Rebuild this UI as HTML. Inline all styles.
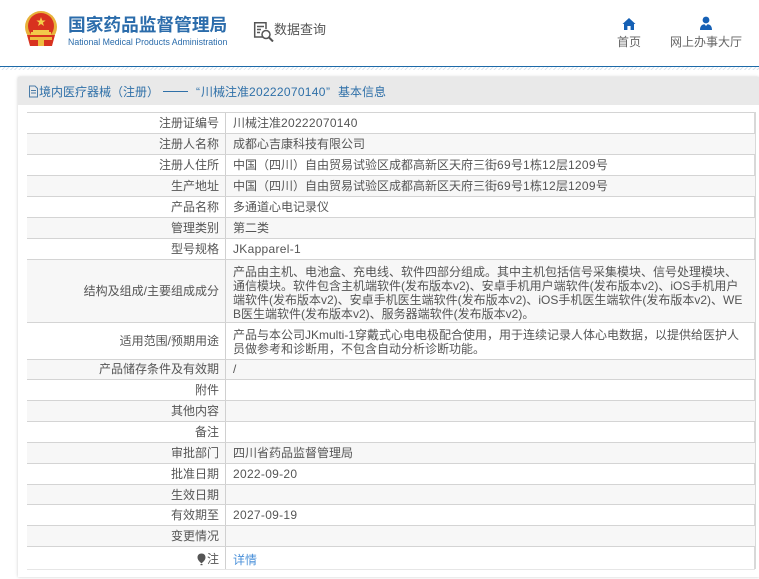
<!DOCTYPE html>
<html lang="zh"><head><meta charset="utf-8"><style>
html,body{margin:0;padding:0;background:#fff}
#p{position:relative;width:759px;height:579px;overflow:hidden;background:#fff;font-family:"Liberation Sans","Noto Sans CJK SC",sans-serif;font-size:12px;color:#555}
#p>*{position:absolute}
.r{left:27px;width:728px;box-sizing:border-box;border-bottom:1px solid #d4d4d4}
.g{background:#f7f7f7}
.l{position:absolute;right:536px;top:0;white-space:nowrap;line-height:21px}
.v{position:absolute;left:206px;top:0;width:518px;line-height:14px;white-space:nowrap}
.o{line-height:21px}
.s{position:absolute;left:198px;top:0;bottom:0;width:1px;background:#d0d0d0}
.d{letter-spacing:.3px}
.h{top:83px;line-height:19px;color:#2f70a8;white-space:nowrap}
</style></head><body><div id="p">
<svg style="left:24px;top:11px" width="34" height="36" viewBox="0 0 34 36">
<circle cx="17" cy="16" r="16" fill="#e8b23a"/><circle cx="17" cy="15" r="13" fill="#d8321f"/>
<polygon points="17,6 18.2,9.5 21.6,9.5 18.9,11.6 20,15 17,13 14,15 15.1,11.6 12.4,9.5 15.8,9.5" fill="#f4cf4a"/>
<rect x="9" y="19" width="16" height="2" fill="#f2c94a"/><rect x="7" y="21" width="20" height="3" fill="#f2c94a"/>
<path d="M3 24 L31 24 L28 35 L6 35 Z" fill="#d8321f"/><path d="M6 26 H28 V29 H6Z M14 29 H20 V35 H14Z" fill="#eebc3f"/>
</svg>
<div style="left:68px;top:13px;font-size:17.7px;font-weight:bold;color:#2b6cab;line-height:24px;white-space:nowrap">国家药品监督管理局</div>
<div style="left:68px;top:36px;font-size:8.77px;color:#2b6cab;line-height:12px;white-space:nowrap">National Medical Products Administration</div>
<svg style="left:253px;top:21px" width="21" height="21" viewBox="0 0 21 21" fill="none" stroke="#555" stroke-width="1.5">
<path d="M10 16H1.7V1.7H13V8"/><path d="M4 5.5H11M4 8.5H8M4 11.5H7"/><circle cx="13" cy="13.5" r="4"/><path d="M16 16.5L20 20.5" stroke-width="2"/>
</svg>
<div style="left:274px;top:20px;font-size:13px;color:#555;line-height:20px;white-space:nowrap">数据查询</div>
<svg style="left:622px;top:17px" width="14" height="14" viewBox="0 0 14 14"><path d="M7 1 L13.5 7 L12 7 V13 H8.6 V9 H5.4 V13 H2 V7 H.5 Z" fill="#1560b5"/></svg>
<svg style="left:699px;top:16px" width="14" height="14" viewBox="0 0 14 14"><circle cx="7" cy="4" r="3.4" fill="#1560b5"/><path d="M1 14 C1 10 3 8.5 5.5 8.3 L7 10 L8.5 8.3 C11 8.5 13 10 13 14 Z" fill="#1560b5"/></svg>
<div style="left:617px;top:33px;line-height:18px;white-space:nowrap;color:#666">首页</div>
<div style="left:670px;top:33px;line-height:18px;white-space:nowrap;color:#666">网上办事大厅</div>
<div style="left:0;top:66px;width:759px;height:1px;background:#1d6aa8"></div>
<div style="left:0;top:67px;width:759px;height:3px;background:repeating-linear-gradient(135deg,#dbe5ee 0 1px,#fff 1px 3px)"></div>
<div style="left:18px;top:77px;width:741px;height:500px;box-shadow:0 0 3px #ccc"></div>
<div style="left:18px;top:77px;width:741px;height:28px;background:#e9e9e9"></div>
<svg style="left:28px;top:85px" width="11" height="13" viewBox="0 0 11 13" fill="none" stroke="#4a7ca8"><path d="M1.5 1H7L9.5 3.5V12H1.5Z M3 5.5H8M3 8H8"/></svg>
<div class="h" style="left:39px">境内医疗器械</div>
<div class="h" style="left:111px">（</div>
<div class="h" style="left:123px">注册</div>
<div class="h" style="left:147px">）</div>
<div class="h" style="left:163px;width:25px;top:91px;height:1px;background:#2f70a8"></div>
<div class="h" style="left:196px">“</div>
<div class="h" style="left:201px">川械注准<span style="letter-spacing:.3px">20222070140</span></div>
<div class="h" style="left:326px">”</div>
<div class="h" style="left:338px">基本信息</div>
<div style="left:27px;top:112px;width:728px;height:1px;background:#d4d4d4"></div>
<div style="left:754px;top:112px;width:2px;height:457px;background:#d8d8d8"></div>

<div class="r" style="top:113px;height:21px"><div class="s"></div><div class="l">注册证编号</div><div class="v o">川械注准<span class="d">20222070140</span></div></div>
<div class="r g" style="top:134px;height:21px"><div class="s"></div><div class="l">注册人名称</div><div class="v o">成都心吉康科技有限公司</div></div>
<div class="r" style="top:155px;height:21px"><div class="s"></div><div class="l">注册人住所</div><div class="v o">中国（四川）自由贸易试验区成都高新区天府三街<span class="d">69</span>号<span class="d">1</span>栋<span class="d">12</span>层<span class="d">1209</span>号</div></div>
<div class="r g" style="top:176px;height:21px"><div class="s"></div><div class="l">生产地址</div><div class="v o">中国（四川）自由贸易试验区成都高新区天府三街<span class="d">69</span>号<span class="d">1</span>栋<span class="d">12</span>层<span class="d">1209</span>号</div></div>
<div class="r" style="top:197px;height:21px"><div class="s"></div><div class="l">产品名称</div><div class="v o">多通道心电记录仪</div></div>
<div class="r g" style="top:218px;height:21px"><div class="s"></div><div class="l">管理类别</div><div class="v o">第二类</div></div>
<div class="r" style="top:239px;height:21px"><div class="s"></div><div class="l">型号规格</div><div class="v o"><span class="d">JKapparel-1</span></div></div>
<div class="r g" style="top:260px;height:63px"><div class="s"></div><div class="l" style="top:21px">结构及组成/主要组成成分</div><div class="v" style="top:5px">产品由主机、电池盒、充电线、软件四部分组成。其中主机包括信号采集模块、信号处理模块、<br>通信模块。软件包含主机端软件(发布版本v2)、安卓手机用户端软件(发布版本v2)、iOS手机用户<br>端软件(发布版本v2)、安卓手机医生端软件(发布版本v2)、iOS手机医生端软件(发布版本v2)、WE<br>B医生端软件(发布版本v2)、服务器端软件(发布版本v2)。</div></div>
<div class="r" style="top:323px;height:37px"><div class="s"></div><div class="l" style="top:8px">适用范围/预期用途</div><div class="v" style="top:5px">产品与本公司JKmulti-1穿戴式心电电极配合使用，用于连续记录人体心电数据，以提供给医护人<br>员做参考和诊断用，不包含自动分析诊断功能。</div></div>
<div class="r g" style="top:360px;height:20px"><div class="s"></div><div class="l" style="line-height:19px">产品储存条件及有效期</div><div class="v" style="line-height:19px">/</div></div>
<div class="r" style="top:380px;height:21px"><div class="s"></div><div class="l">附件</div></div>
<div class="r g" style="top:401px;height:21px"><div class="s"></div><div class="l">其他内容</div></div>
<div class="r" style="top:422px;height:21px"><div class="s"></div><div class="l">备注</div></div>
<div class="r g" style="top:443px;height:21px"><div class="s"></div><div class="l">审批部门</div><div class="v o">四川省药品监督管理局</div></div>
<div class="r" style="top:464px;height:21px"><div class="s"></div><div class="l">批准日期</div><div class="v o"><span class="d">2022-09-20</span></div></div>
<div class="r g" style="top:485px;height:20px"><div class="s"></div><div class="l">生效日期</div></div>
<div class="r" style="top:505px;height:21px"><div class="s"></div><div class="l">有效期至</div><div class="v o"><span class="d">2027-09-19</span></div></div>
<div class="r g" style="top:526px;height:21px"><div class="s"></div><div class="l">变更情况</div></div>
<div class="r" style="top:547px;height:23px;border-color:#e6e6e6"><div class="s"></div><div class="l" style="line-height:24px">注</div><div class="v" style="line-height:26px;color:#4a90d9">详情</div>
<svg style="position:absolute;left:170px;top:6px" width="9" height="13" viewBox="0 0 9 13"><path d="M4.5 0.5C7 .5 8.5 2 8.5 4.5C8.5 7 6 9 4.5 10.5C3 9 .5 7 .5 4.5C.5 2 2 .5 4.5 .5Z" fill="#555"/><rect x="3.5" y="11" width="2" height="1.2" fill="#555"/></svg></div>
</div></body></html>
